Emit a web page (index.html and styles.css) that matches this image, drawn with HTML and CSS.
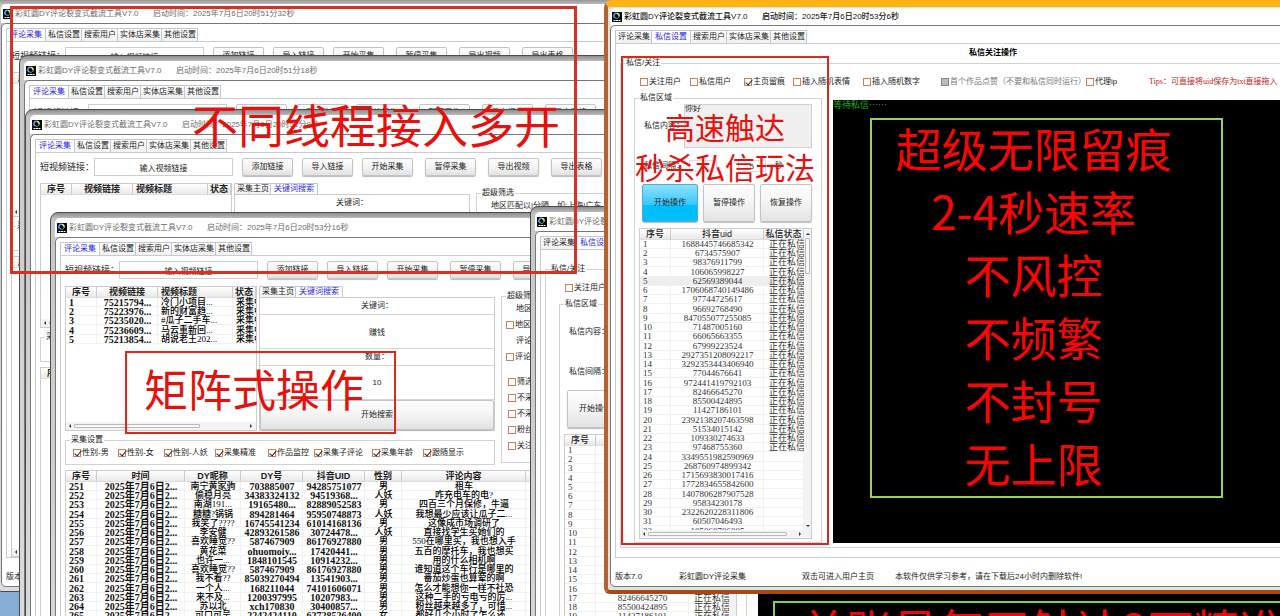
FILE: index.html
```html
<!DOCTYPE html>
<html lang="zh-CN">
<head>
<meta charset="utf-8">
<title>彩虹圆DY评论裂变式截流工具V7.0</title>
<link rel="stylesheet" href="styles.css">
</head>
<body>
<svg class="defs" aria-hidden="true">
  <symbol id="logo" viewBox="0 0 20 20">
    <rect width="20" height="20" fill="#05070c"/>
    <path d="M7 12a4.500 4.500 0 0 1 3-9" fill="none" stroke="#5aa8ff" stroke-width="3"/>
    <path d="M10 3a4.500 4.500 0 0 1 4 6" fill="none" stroke="#e8f05a" stroke-width="3"/>
    <path d="M14 9a4.500 4.500 0 0 1-7 3" fill="none" stroke="#53c87a" stroke-width="2"/>
    <path d="M3 17h4m1 0h4m1 0h4" stroke="#fff" stroke-width="2"/>
  </symbol>
</svg>
<main class="desktop">

  <section class="win win-a">
    <header class="titlebar"><svg class="logo"><use href="#logo"/></svg><span class="name">彩虹圆DY评论裂变式截流工具V7.0</span><span>启动时间：2025年7月6日20时51分32秒</span></header>
    <div class="client">
      <nav class="tabs"><button class="on">评论采集</button><button>私信设置</button><button>搜索用户</button><button>实体店采集</button><button>其他设置</button></nav>
      <div class="page">
        <div class="linkbar">
          <label>短视频链接：<input type="text" value="输入视频链接"></label>
          <div class="btns near"><button>添加链接</button><button>导入链接</button><button>开始采集</button></div>
          <div class="btns far"><button>暂停采集</button><button>导出视频</button><button>导出表格</button></div>
        </div>
        <div class="middle">
          <div class="left">
            <div class="panes">
              <div class="grid videos"><table><thead><tr><th class="c-no">序号</th><th>视频链接</th></tr></thead></table><div class="hscroll"><i></i></div></div>
            </div>
            <fieldset class="options"><legend>采集设置</legend></fieldset>
          </div>
        </div>
        <div class="grid people"><table><thead><tr><th class="c-no">序号</th><th>时间</th></tr></thead></table><div class="hscroll"><i></i></div></div>
      </div>
      <footer class="status"><span>版本7.0</span><span>彩虹圆DY评论采集</span></footer>
    </div>
  </section>

  <section class="win win-b">
    <header class="titlebar"><svg class="logo"><use href="#logo"/></svg><span class="name">彩虹圆DY评论裂变式截流工具V7.0</span><span>启动时间：2025年7月6日20时51分18秒</span></header>
    <div class="client">
      <nav class="tabs"><button class="on">评论采集</button><button>私信设置</button><button>搜索用户</button><button>实体店采集</button><button>其他设置</button></nav>
      <div class="page">
        <div class="linkbar">
          <label>短视频链接：<input type="text" value="输入视频链接"></label>
          <div class="btns near"><button>添加链接</button><button>导入链接</button><button>开始采集</button></div>
          <div class="btns far"><button>暂停采集</button><button>导出视频</button><button>导出表格</button></div>
        </div>
      </div>
    </div>
  </section>

  <section class="win win-c">
    <header class="titlebar"><svg class="logo"><use href="#logo"/></svg><span class="name">彩虹圆DY评论裂变式截流工具V7.0</span><span>启动时间：2025年7月6日20时51分8秒</span></header>
    <div class="client">
      <nav class="tabs"><button class="on">评论采集</button><button>私信设置</button><button>搜索用户</button><button>实体店采集</button><button>其他设置</button></nav>
      <div class="page">
        <div class="linkbar">
          <label>短视频链接：<input type="text" value="输入视频链接"></label>
          <div class="btns near"><button>添加链接</button><button>导入链接</button><button>开始采集</button></div>
          <div class="btns far"><button>暂停采集</button><button>导出视频</button><button>导出表格</button></div>
        </div>
        <div class="middle">
          <div class="left">
            <div class="panes">
              <div class="grid videos"><table><thead><tr><th class="c-no">序号</th><th class="c-link">视频链接</th><th class="c-title">视频标题</th><th>状态</th></tr></thead></table><div class="hscroll"><i></i></div></div>
              <div class="search">
                <nav class="subtabs"><button>采集主页</button><button class="on">关键词搜索</button></nav>
                <div class="form"><div class="cap">关键词：</div></div>
              </div>
            </div>
            <fieldset class="options"><legend>采集设置</legend></fieldset>
          </div>
          <fieldset class="filter"><legend>超级筛选</legend><p>地区匹配以|分隔，如:上海|广东</p></fieldset>
        </div>
        <div class="grid people"><table><thead><tr><th class="c-no">序号</th><th>时间</th></tr></thead></table></div>
      </div>
    </div>
  </section>

  <section class="win win-d">
    <header class="titlebar"><svg class="logo"><use href="#logo"/></svg><span class="name">彩虹圆DY评论裂变式截流工具V7.0</span><span>启动时间：2025年7月6日20时53分16秒</span></header>
    <div class="client">
      <nav class="tabs"><button class="on">评论采集</button><button>私信设置</button><button>搜索用户</button><button>实体店采集</button><button>其他设置</button></nav>
      <div class="page">
        <div class="linkbar">
          <label>短视频链接：<input type="text" value="输入视频链接"></label>
          <div class="btns near"><button>添加链接</button><button>导入链接</button><button>开始采集</button></div>
          <div class="btns far"><button>暂停采集</button><button>导出视频</button><button>导出表格</button></div>
        </div>
        <div class="middle">
          <div class="left">
            <div class="panes">
              <div class="grid videos">
                <table>
                  <thead><tr><th class="c-no">序号</th><th class="c-link">视频链接</th><th class="c-title">视频标题</th><th>状态</th></tr></thead>
                  <tbody>
                    <tr><td>1</td><td>75215794...</td><td>冷门小项目...</td><td>采集中</td></tr>
                    <tr><td>2</td><td>75223976...</td><td>新的财富趋...</td><td>采集中</td></tr>
                    <tr><td>3</td><td>75235020...</td><td>#瓜子二手车...</td><td>采集中</td></tr>
                    <tr><td>4</td><td>75236609...</td><td>马云重新回...</td><td>采集中</td></tr>
                    <tr><td>5</td><td>75213854...</td><td>胡说老王202...</td><td>采集中</td></tr>
                  </tbody>
                </table>
                <div class="hscroll"><i></i></div>
              </div>
              <div class="search">
                <nav class="subtabs"><button>采集主页</button><button class="on">关键词搜索</button></nav>
                <div class="form">
                  <label class="cap" for="kw">关键词：</label>
                  <input id="kw" type="text" value="赚钱">
                  <label class="cap" for="qty">数量：</label>
                  <input id="qty" type="text" value="10">
                  <button>开始搜索</button>
                </div>
              </div>
            </div>
            <fieldset class="options"><legend>采集设置</legend>
              <div class="checks">
                <label><input type="checkbox" checked>性别-男</label>
                <label><input type="checkbox" checked>性别-女</label>
                <label><input type="checkbox" checked>性别-人妖</label>
                <label><input type="checkbox" checked>采集精准</label>
                <label><input type="checkbox" checked>作品监控</label>
                <label><input type="checkbox" checked>采集子评论</label>
                <label><input type="checkbox" checked>采集年龄</label>
                <label><input type="checkbox" checked>跟随显示</label>
              </div>
            </fieldset>
          </div>
          <fieldset class="filter"><legend>超级筛选</legend>
            <p>地区匹配</p>
            <label><input type="checkbox">地区筛选</label>
            <p>评论匹配</p>
            <label><input type="checkbox">评论筛选</label>
            <div class="more">
              <label><input type="checkbox">筛选</label>
              <label><input type="checkbox">不采集</label>
              <label><input type="checkbox">不采集</label>
              <label><input type="checkbox">粉丝数</label>
              <label><input type="checkbox">关注数</label>
            </div>
          </fieldset>
        </div>
        <div class="grid people">
          <table>
            <thead><tr><th class="c-no">序号</th><th class="c-time">时间</th><th class="c-nick">DY昵称</th><th class="c-id">DY号</th><th class="c-id">抖音UID</th><th class="c-sex">性别</th><th class="c-text">评论内容</th><th></th></tr></thead>
            <tbody>
              <tr><td>251</td><td>2025年7月6日2...</td><td>南宁黄家驹</td><td>703885007</td><td>94285751077</td><td>男</td><td>租车</td><td></td></tr>
              <tr><td>252</td><td>2025年7月6日2...</td><td>偷稳月亮</td><td>34383324132</td><td>94519368...</td><td>人妖</td><td>咋充电车的电?</td><td></td></tr>
              <tr><td>253</td><td>2025年7月6日2...</td><td>南湖191...</td><td>19165480...</td><td>82889052583</td><td>男</td><td>四百三个月保修，牛逼</td><td></td></tr>
              <tr><td>254</td><td>2025年7月6日2...</td><td>糖糖?锅锅</td><td>894281464</td><td>95950748873</td><td>人妖</td><td>我想最少应该让瓜子二...</td><td></td></tr>
              <tr><td>255</td><td>2025年7月6日2...</td><td>我笑了????</td><td>16745541234</td><td>61014168136</td><td>男</td><td>这像成市场调研了</td><td></td></tr>
              <tr><td>256</td><td>2025年7月6日2...</td><td>李安健</td><td>42893261586</td><td>30724478...</td><td>人妖</td><td>直接找学生买她们的</td><td></td></tr>
              <tr><td>257</td><td>2025年7月6日2...</td><td>喜欢睡觉??</td><td>587467909</td><td>86176927880</td><td>男</td><td>550在哪里买，我也想入手</td><td></td></tr>
              <tr><td>258</td><td>2025年7月6日2...</td><td>黄花菜</td><td>ohuomoiy...</td><td>17420441...</td><td>男</td><td>五百的摩托车，我也想买</td><td></td></tr>
              <tr><td>259</td><td>2025年7月6日2...</td><td>也许一...</td><td>1848101545</td><td>10914232...</td><td>男</td><td>用的什么相机啊</td><td></td></tr>
              <tr><td>260</td><td>2025年7月6日2...</td><td>喜欢睡觉??</td><td>587467909</td><td>86176927880</td><td>男</td><td>谁知道这个车行是哪里的</td><td></td></tr>
              <tr><td>261</td><td>2025年7月6日2...</td><td>我不看??</td><td>85039270494</td><td>13541903...</td><td>男</td><td>番茄炒蛋也算荤的啊</td><td></td></tr>
              <tr><td>262</td><td>2025年7月6日2...</td><td>一个人...</td><td>168211044</td><td>74101606071</td><td>男</td><td>怎么才能想你一样不社恐</td><td></td></tr>
              <tr><td>263</td><td>2025年7月6日2...</td><td>来不及...</td><td>1200397995</td><td>10207983...</td><td>男</td><td>这种二手的亏电亏的厉...</td><td></td></tr>
              <tr><td>264</td><td>2025年7月6日2...</td><td>苏以北</td><td>xch170830</td><td>30400857...</td><td>男</td><td>粉丝越来越多了，可惜...</td><td></td></tr>
              <tr><td>265</td><td>2025年7月6日2...</td><td>可口可呈</td><td>2242424110</td><td>62728526400</td><td>女</td><td>都好几个小时了怎么还...</td><td></td></tr>
            </tbody>
          </table>
        </div>
      </div>
    </div>
  </section>

  <section class="win win-e">
    <header class="titlebar"><svg class="logo"><use href="#logo"/></svg><span class="name">彩虹圆DY评论裂变式截流工具V7.0</span></header>
    <div class="client">
      <nav class="tabs"><button>评论采集</button><button class="on">私信设置</button><button>搜索用户</button></nav>
      <div class="page">
        <h2></h2>
        <fieldset class="follow"><legend>私信/关注</legend>
          <div class="checks"><label><input type="checkbox">关注用户</label></div>
          <div class="split">
            <fieldset class="dm"><legend>私信区域</legend>
              <label class="content">私信内容：<textarea></textarea></label>
              <div class="interval">私信间隔：</div>
              <div class="actions"><button>开始操作</button></div>
              <div class="grid uids">
                <table>
                  <thead><tr><th class="c-no">序号</th><th class="c-uid">抖音uid</th><th>私信状态</th></tr></thead>
                  <tbody>
                    <tr><td>1</td><td></td><td></td></tr>
                    <tr><td>2</td><td></td><td></td></tr>
                    <tr><td>3</td><td></td><td></td></tr>
                    <tr><td>4</td><td></td><td></td></tr>
                    <tr><td>5</td><td></td><td></td></tr>
                    <tr><td>6</td><td></td><td></td></tr>
                    <tr><td>7</td><td></td><td></td></tr>
                    <tr><td>8</td><td></td><td></td></tr>
                    <tr><td>9</td><td></td><td></td></tr>
                    <tr><td>10</td><td></td><td></td></tr>
                    <tr><td>11</td><td></td><td></td></tr>
                    <tr><td>12</td><td></td><td></td></tr>
                    <tr><td>13</td><td></td><td></td></tr>
                    <tr><td>14</td><td></td><td></td></tr>
                    <tr><td>15</td><td></td><td></td></tr>
                    <tr><td>16</td><td></td><td></td></tr>
                    <tr><td>17</td><td>82466645270</td><td>正在私信</td></tr>
                    <tr><td>18</td><td>85500424895</td><td>正在私信</td></tr>
                    <tr><td>19</td><td>11427186101</td><td>正在私信</td></tr>
                  </tbody>
                </table>
                <div class="vscroll"><i></i></div>
              </div>
            </fieldset>
            <div class="log"></div>
          </div>
        </fieldset>
      </div>
      <footer class="status"></footer>
    </div>
  </section>

  <div class="note note-volume">单账号每天触达2万精准</div>

  <section class="win win-f">
    <header class="titlebar"><svg class="logo"><use href="#logo"/></svg><span class="name">彩虹圆DY评论裂变式截流工具V7.0</span><span>启动时间：2025年7月6日20时53分6秒</span></header>
    <div class="client">
      <nav class="tabs"><button>评论采集</button><button class="on">私信设置</button><button>搜索用户</button><button>实体店采集</button><button>其他设置</button></nav>
      <div class="page">
        <h2>私信关注操作</h2>
        <fieldset class="follow"><legend>私信/关注</legend>
          <div class="checks">
            <label><input type="checkbox">关注用户</label>
            <label><input type="checkbox">私信用户</label>
            <label><input type="checkbox" checked>主页留痕</label>
            <label><input type="checkbox">插入随机表情</label>
            <label><input type="checkbox">插入随机数字</label>
            <label class="off"><input type="checkbox" disabled>首个作品点赞（不要和私信同时运行）</label>
            <label><input type="checkbox">代理ip</label>
            <span class="tips">Tips：可直接将uid保存为txt直接拖入</span>
          </div>
          <div class="split">
            <fieldset class="dm"><legend>私信区域</legend>
              <label class="content">私信内容：<textarea>你好</textarea></label>
              <div class="interval"><label for="from">私信间隔：</label><input id="from" type="text" value=""><span>-</span><input type="text" value="5" aria-label="最大间隔"><span>秒</span></div>
              <div class="actions"><button class="go">开始操作</button><button>暂停操作</button><button>恢复操作</button></div>
              <div class="grid uids">
                <table>
                  <thead><tr><th class="c-no">序号</th><th class="c-uid">抖音uid</th><th>私信状态</th></tr></thead>
                  <tbody>
                    <tr><td>1</td><td>1688445746685342</td><td>正在私信</td></tr>
                    <tr><td>2</td><td>6734575907</td><td>正在私信</td></tr>
                    <tr><td>3</td><td>98376911799</td><td>正在私信</td></tr>
                    <tr><td>4</td><td>106065998227</td><td>正在私信</td></tr>
                    <tr class="sel"><td>5</td><td>62569389044</td><td>正在私信</td></tr>
                    <tr><td>6</td><td>1706068740149486</td><td>正在私信</td></tr>
                    <tr><td>7</td><td>97744725617</td><td>正在私信</td></tr>
                    <tr><td>8</td><td>96692768490</td><td>正在私信</td></tr>
                    <tr><td>9</td><td>847055077255085</td><td>正在私信</td></tr>
                    <tr><td>10</td><td>71487005160</td><td>正在私信</td></tr>
                    <tr><td>11</td><td>66065663355</td><td>正在私信</td></tr>
                    <tr><td>12</td><td>67999223524</td><td>正在私信</td></tr>
                    <tr><td>13</td><td>2927351208092217</td><td>正在私信</td></tr>
                    <tr><td>14</td><td>3292353443406940</td><td>正在私信</td></tr>
                    <tr><td>15</td><td>77044676641</td><td>正在私信</td></tr>
                    <tr><td>16</td><td>972441419792103</td><td>正在私信</td></tr>
                    <tr><td>17</td><td>82466645270</td><td>正在私信</td></tr>
                    <tr><td>18</td><td>85500424895</td><td>正在私信</td></tr>
                    <tr><td>19</td><td>11427186101</td><td>正在私信</td></tr>
                    <tr><td>20</td><td>2392138207463598</td><td>正在私信</td></tr>
                    <tr><td>21</td><td>51534015142</td><td>正在私信</td></tr>
                    <tr><td>22</td><td>109330274633</td><td>正在私信</td></tr>
                    <tr><td>23</td><td>97468755360</td><td>正在私信</td></tr>
                    <tr><td>24</td><td>3349551982590969</td><td></td></tr>
                    <tr><td>25</td><td>268760974899342</td><td></td></tr>
                    <tr><td>26</td><td>1715693830017416</td><td></td></tr>
                    <tr><td>27</td><td>1772834655842600</td><td></td></tr>
                    <tr><td>28</td><td>1407806287907528</td><td></td></tr>
                    <tr><td>29</td><td>95834230178</td><td></td></tr>
                    <tr><td>30</td><td>2322620228311806</td><td></td></tr>
                    <tr><td>31</td><td>60507046493</td><td></td></tr>
                    <tr><td>32</td><td>105060706005</td><td></td></tr>
                  </tbody>
                </table>
                <div class="vscroll"><i></i></div>
                <div class="hscroll"><i></i></div>
              </div>
            </fieldset>
            <div class="log">等待私信……</div>
          </div>
        </fieldset>
      </div>
      <footer class="status"><span>版本7.0</span><span>彩虹圆DY评论采集</span><span>双击可进入用户主页</span><span>本软件仅供学习参考，请在下载后24小时内删除软件!</span></footer>
    </div>
  </section>

  <div class="note note-threads">不同线程接入多开</div>
  <div class="note note-matrix">矩阵式操作</div>
  <div class="note note-reach"><p>高速触达</p><p>秒杀私信玩法</p></div>
  <div class="note note-perks"><p>超级无限留痕</p><p>2-4秒速率</p><p>不风控</p><p>不频繁</p><p>不封号</p><p>无上限</p></div>
</main>
</body>
</html>
```
FILE: styles.css
```css
* { box-sizing: border-box; }
body { margin: 0; font: 8px/10px "Liberation Sans", "Noto Sans CJK SC", sans-serif; color: #222; }
button, input, textarea { font: inherit; color: inherit; margin: 0; }
p, h2 { margin: 0; }
fieldset { margin: 0; padding: 0; border: 1px solid #d2d2d2; min-width: 0; }
legend { margin-left: 4px; padding: 0 1px; height: 10px; font-size: 8px; line-height: 10px; }
.defs { position: absolute; width: 0; height: 0; }

.desktop {
  position: relative;
  height: 100vh;
  overflow: hidden;
  white-space: nowrap;
  background: linear-gradient(#b4b4b4 10px, #86add2 10px);
}

/* window chrome */
.win {
  position: absolute;
  display: flex;
  flex-direction: column;
  width: 780px;
  height: 594px;
  padding: 5px 4px 4px;
  border: 1px solid #4c4c4c;
  border-radius: 8px 8px 6px 6px;
  background: linear-gradient(#8e8e8e, #c4c4c4 6px, #c8c8c8 30px, #dcdcdc);
}
.win-a { left: -4px; top: -2px; }
.win-b { left: 19px; top: 55px; }
.win-c { left: 25px; top: 109px; }
.win-d { left: 50px; top: 212px; }
.win-e { left: 530px; top: 206px; }
.win-f {
  left: 604px;
  top: 0;
  padding: 1px 4px 3px 2px;
  border: 4px solid #b9602f;
  border-top: 7px solid #fdb414;
  border-bottom-color: #a34a18;
  background: #e4e0dc;
}
.win-f .titlebar { height: 17px; color: #111; font-weight: 500; }
.titlebar {
  display: flex;
  align-items: center;
  height: 19px;
  flex: none;
  padding-left: 2px;
  border-radius: 5px 5px 0 0;
  background: #fff;
  color: #6c6c6c;
}
.logo { width: 10px; height: 10px; margin-right: 2px; }
.name { width: 138px; }
.client {
  flex: 1;
  min-height: 0;
  display: flex;
  flex-direction: column;
  padding: 4px 4px 0;
  border: 1px solid #777;
  border-radius: 5px;
  background: #fff;
}
.tabs, .subtabs { display: flex; flex: none; }
.tabs { height: 13px; }
.tabs button, .subtabs button {
  padding: 0 1px 0 2px;
  border: 1px solid #c2c8d0;
  border-bottom: 0;
  border-left-width: 0;
  background: linear-gradient(#fff, #f1f1f1);
}
.tabs button:first-child, .subtabs button:first-child { border-left-width: 1px; }
.tabs .on, .subtabs .on { background: #fff; color: #2a1ee0; padding: 0 3px; }
.page {
  flex: 1;
  min-height: 0;
  display: flex;
  flex-direction: column;
  padding: 0 4px;
  border: 1px solid #c8ccd0;
}
.status { display: grid; grid-template-columns: 64px 123px 93px 1fr; align-items: center; height: 28px; padding-top: 10px; flex: none; }

/* form controls */
input[type=checkbox] {
  appearance: none;
  position: relative;
  flex: none;
  width: 8px;
  height: 8px;
  margin-right: 1px;
  border: 1px solid #c8805e;
  background: #fff;
}
input[type=checkbox]:checked::after {
  content: "";
  position: absolute;
  left: 2px;
  top: -1px;
  width: 3px;
  height: 6px;
  border: solid #222;
  border-width: 0 1px 1px 0;
  transform: rotate(40deg);
}
input[type=checkbox]:disabled { border-color: #888; background: #bbb; }
.checks label, .filter label { display: flex; align-items: center; }
.btns button, .actions button, .form button {
  padding: 0;
  border: 1px solid #c4c4c4;
  border-radius: 2px;
  background: linear-gradient(#fdfdfd, #f4f4f4 50%, #e2e2e2);
  box-shadow: 0 1px 1px #bbb;
}

/* collection page */
.linkbar { display: flex; height: 18px; margin-top: 5px; flex: none; }
.linkbar label { display: flex; justify-content: space-between; align-items: center; width: 193px; margin-right: 9px; font-size: 9px; }
.linkbar input { width: 144px; height: 18px; padding: 0; border: 1px solid #cdcdcd; text-align: center; font-size: 8px; }
.btns { display: flex; }
.btns button { width: 51px; height: 18px; }
.near { gap: 9px; margin-right: 12px; }
.far { gap: 12px; }
.middle { display: flex; gap: 6px; height: 177px; margin-top: 7px; flex: none; }
.left { width: 430px; }
.panes { display: flex; gap: 2px; height: 145px; }
.videos { width: 192px; }
.search { flex: 1; display: flex; flex-direction: column; }
.subtabs { height: 11px; }
.form { flex: 1; display: flex; flex-direction: column; border: 1px solid #ccc; text-align: center; }
.cap { height: 16px; line-height: 16px; }
.form input { height: 35px; padding: 0; border: 1px solid #d4d4d4; border-width: 1px 0; text-align: center; }
.form button { flex: 1; }
.options { height: 30px; margin-top: 4px; }
.options .checks { display: grid; grid-template-columns: 45px 46px 51px 53px 46px 58px 51px 1fr; padding: 3px 0 0 7px; }
.filter { flex: 1; height: 172px; margin-top: 5px; padding-left: 4px; }
.filter legend { margin-left: 0; }
.filter p { padding: 3px 0 3px 10px; height: 16px; }
.filter > label { height: 16px; }
.more { display: flex; flex-direction: column; gap: 6px; padding: 12px 0 0 2px; }

/* data grids */
.grid { position: relative; border: 1px solid #ccc; overflow: hidden; background: #fff; }
.grid table { width: 100%; table-layout: fixed; border-spacing: 0; }
.grid th, .grid td { padding: 0; line-height: 9px; }
.grid th { height: 11px; font-size: 9px; font-weight: 700; border-right: 1px solid #ccc; border-bottom: 1px solid #ddd; background: linear-gradient(#fff, #e9e9e9); }
.grid td { height: 9px; text-align: center; box-shadow: inset -1px -1px #f1f1f1; font-family: "Liberation Serif", "Noto Sans CJK SC", serif; }
.grid tbody tr:nth-child(4n) td { height: 10px; }
.grid td:first-child { text-align: left; padding-left: 3px; }
.c-no { width: 31px; }
.c-link { width: 61px; }
.c-title { width: 75px; }
.videos th:nth-child(3), .videos td:nth-child(3), .videos td:last-child { text-align: left; padding-left: 3px; }
.videos td, .people td { font-size: 10px; font-weight: 700; color: #111; }
.people td:nth-child(3), .people td:nth-child(6), .people td:nth-child(7), .videos td:nth-child(n+3) { font-size: 9px; font-weight: 500; color: #000; }
.people { flex: 1; margin-top: 7px; }
.c-time { width: 88px; }
.c-nick { width: 56px; }
.c-id { width: 62px; }
.c-sex { width: 37px; }
.c-text { width: 124px; }
.hscroll, .vscroll { position: absolute; background: #f3f3f3; }
.hscroll { left: 0; right: 0; bottom: 0; height: 8px; padding: 2px 24px 2px 8px; }
.videos .hscroll { padding-right: 56px; }
.vscroll { right: 0; top: 0; bottom: 8px; width: 7px; padding: 9px 1px; }
.hscroll i, .vscroll i { display: block; border: 1px solid #b8b8b8; border-radius: 1px; background: #fafafa; }
.hscroll i { height: 4px; }
.vscroll i { height: 36px; }
.hscroll::before, .hscroll::after, .vscroll::before, .vscroll::after { content: ""; position: absolute; border: 2px solid transparent; }
.hscroll::before { left: 1px; top: 2px; border-right-color: #333; }
.hscroll::after { right: 8px; top: 2px; border-left-color: #333; }
.videos .hscroll::after { right: 2px; }
.vscroll::before { left: 2px; top: 2px; border-bottom-color: #333; }
.vscroll::after { left: 2px; bottom: 1px; border-top-color: #333; }

/* message page */
.page h2 { height: 14px; margin-top: 2px; font-size: 8px; line-height: 14px; text-align: center; color: #000; flex: none; }
.follow { flex: 1; margin: -2px 0 9px; padding-left: 13px; }
.follow > legend { margin-left: -9px; }
.follow > .checks { display: grid; grid-template-columns: 50px 54px 49px 70px 78px 145px 63px 1fr; align-items: center; height: 10px; margin: 9px 0 6px 6px; }
.off { color: #777; }
.tips { color: #c01818; font-family: "Liberation Serif", "Noto Sans CJK SC", serif; }
.split { display: flex; gap: 11px; height: 450px; }
.dm { width: 188px; height: 450px; padding: 1px 9px 0 4px; }
.dm > legend { margin-left: 0; }
.content { display: flex; justify-content: space-between; align-items: center; height: 44px; padding-left: 5px; }
.content textarea { width: 129px; height: 44px; padding: 0; border: 1px solid #d0d0d0; background: #f0f0f0; resize: none; line-height: 8px; }
.interval { display: flex; align-items: center; gap: 9px; height: 12px; margin: 12px 0; padding-left: 5px; }
.interval input { width: 28px; height: 12px; padding: 0; border: 1px solid #ddd; text-align: center; }
.interval label { width: 36px; }
.actions { display: flex; justify-content: space-between; height: 38px; padding-left: 3px; }
.actions button { width: 52px; }
.actions button:first-child { width: 56px; }
.actions .go { border-color: #5aa9cc; background: linear-gradient(#8fe0ff, #35c8fb 55%, #00bfff 56%); }
.uids { height: 311px; margin-top: 6px; padding-right: 7px; }
.uids th { font-weight: 500; }
.uids td { font-size: 9px; color: #333; }
.uids td:last-child { text-align: left; padding-left: 5px; }
.uids .sel td { background: #eee; }
.c-uid { width: 93px; }
.log { flex: 1; margin-top: 7px; background: #000; color: #0ab41c; font: 9px/10px "Noto Sans CJK SC", sans-serif; }

/* promotional captions over the desktop */
.note { position: absolute; color: #e8100c; font-family: "Noto Sans CJK SC", sans-serif; }
.note-threads { left: 10px; top: 6px; width: 567px; height: 268px; padding: 84px 0 0 179px; border: 3px solid #d93025; font-size: 46px; line-height: 60px; }
.note-matrix { left: 125px; top: 351px; width: 271px; height: 83px; padding-left: 17px; border: 2px solid #e02818; font-size: 44px; line-height: 71px; }
.note-reach { left: 621px; top: 56px; width: 208px; height: 489px; padding-top: 48px; border: 2px solid #d42a20; font-size: 30px; line-height: 40px; text-align: center; }
.note-perks { display: flex; flex-direction: column; gap: 8px; left: 870px; top: 118px; width: 353px; height: 380px; padding-right: 26px; border: 2px solid #9ad44e; color: #fa0505; font-size: 46px; line-height: 55px; text-align: center; }
.note-volume { left: 773px; top: 601px; width: 620px; height: 380px; padding-left: 25px; border: 2px solid #8ccc48; color: #fa0505; font-size: 46px; line-height: 50px; }
```
